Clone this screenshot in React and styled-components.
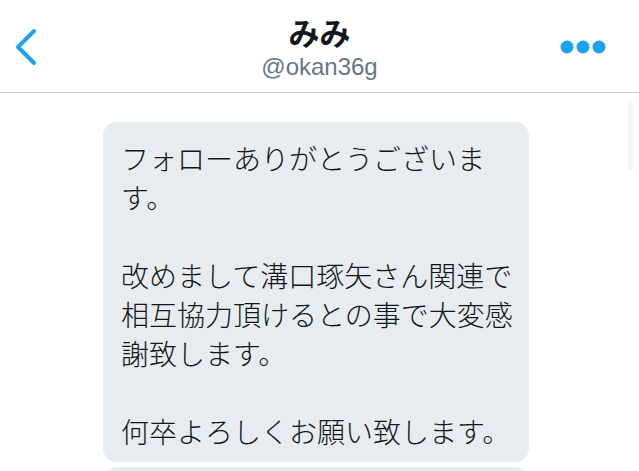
import React from "react";
import styled, { createGlobalStyle } from "styled-components";

const Global = createGlobalStyle`
  html, body { margin: 0; padding: 0; background: #ffffff; }
  body { width: 639px; height: 471px; overflow: hidden; }
`;

const Screen = styled.div`
  position: relative;
  width: 639px;
  height: 471px;
  overflow: hidden;
  background: #ffffff;
  font-family: "Noto Sans CJK JP", "Noto Sans", sans-serif;
`;

const Header = styled.header`
  display: grid;
  grid-template-columns: 1fr auto 1fr;
  align-items: center;
  height: 92px;
  border-bottom: 1px solid #c9cbcd;
  box-sizing: content-box;
`;

const Side = styled.div`
  display: flex;
  justify-content: ${(p) => (p.$end ? "flex-end" : "flex-start")};
  padding: ${(p) => (p.$end ? "0 33px 0 0" : "0 0 0 13px")};
  margin-top: 1px;
`;

const TitleBlock = styled.div`
  display: flex;
  flex-direction: column;
  align-items: center;
  margin-top: 4px;
`;

const Title = styled.div`
  font-family: "Noto Sans CJK JP", sans-serif;
  font-weight: 700;
  font-size: 31px;
  line-height: 36px;
  color: #14171a;
`;

const Handle = styled.div`
  font-family: "Liberation Sans", Arial, sans-serif;
  font-size: 24px;
  line-height: 30px;
  color: #657786;
  margin-top: 2px;
`;

const Thread = styled.main`
  display: flex;
  flex-direction: column;
  gap: 5px;
  padding: 29px 0 0 103px;
`;

const Bubble = styled.div`
  width: 426px;
  box-sizing: border-box;
  background: #e6ecf0;
  border-radius: 14px;
  padding: 17px 10px 11px 18px;
  font-family: "Noto Sans CJK JP", sans-serif;
  font-weight: 300;
  font-size: 28px;
  line-height: 39px;
  color: #14171a;
  white-space: nowrap;
  min-height: ${(p) => p.$min || 0}px;
`;

const Line = styled.div`
  height: 39px;
`;

const Scrollbar = styled.div`
  position: absolute;
  right: 6px;
  top: 100px;
  width: 5px;
  height: 70px;
  border-radius: 3px;
  background: rgba(0, 0, 0, 0.04);
`;

const BackIcon = () => (
  <svg width="26" height="40" viewBox="0 0 26 40">
    <path
      d="M21 4 L5 20 L21 36"
      fill="none"
      stroke="#1da1f2"
      strokeWidth="4"
      strokeLinecap="round"
      strokeLinejoin="round"
    />
  </svg>
);

const MoreIcon = () => (
  <svg width="46" height="14" viewBox="0 0 46 14">
    <circle cx="7" cy="7" r="6.5" fill="#1da1f2" />
    <circle cx="23" cy="7" r="6.5" fill="#1da1f2" />
    <circle cx="39" cy="7" r="6.5" fill="#1da1f2" />
  </svg>
);

const lines = [
  "フォローありがとうございま",
  "す。",
  "",
  "改めまして溝口琢矢さん関連で",
  "相互協力頂けるとの事で大変感",
  "謝致します。",
  "",
  "何卒よろしくお願い致します。",
];

export default function App() {
  return (
    <Screen>
      <Global />
      <Header>
        <Side>
          <BackIcon />
        </Side>
        <TitleBlock>
          <Title>みみ</Title>
          <Handle>@okan36g</Handle>
        </TitleBlock>
        <Side $end>
          <MoreIcon />
        </Side>
      </Header>
      <Thread>
        <Bubble>
          {lines.map((l, i) => (
            <Line key={i}>{l}</Line>
          ))}
        </Bubble>
        <Bubble $min={60} />
      </Thread>
      <Scrollbar />
    </Screen>
  );
}
